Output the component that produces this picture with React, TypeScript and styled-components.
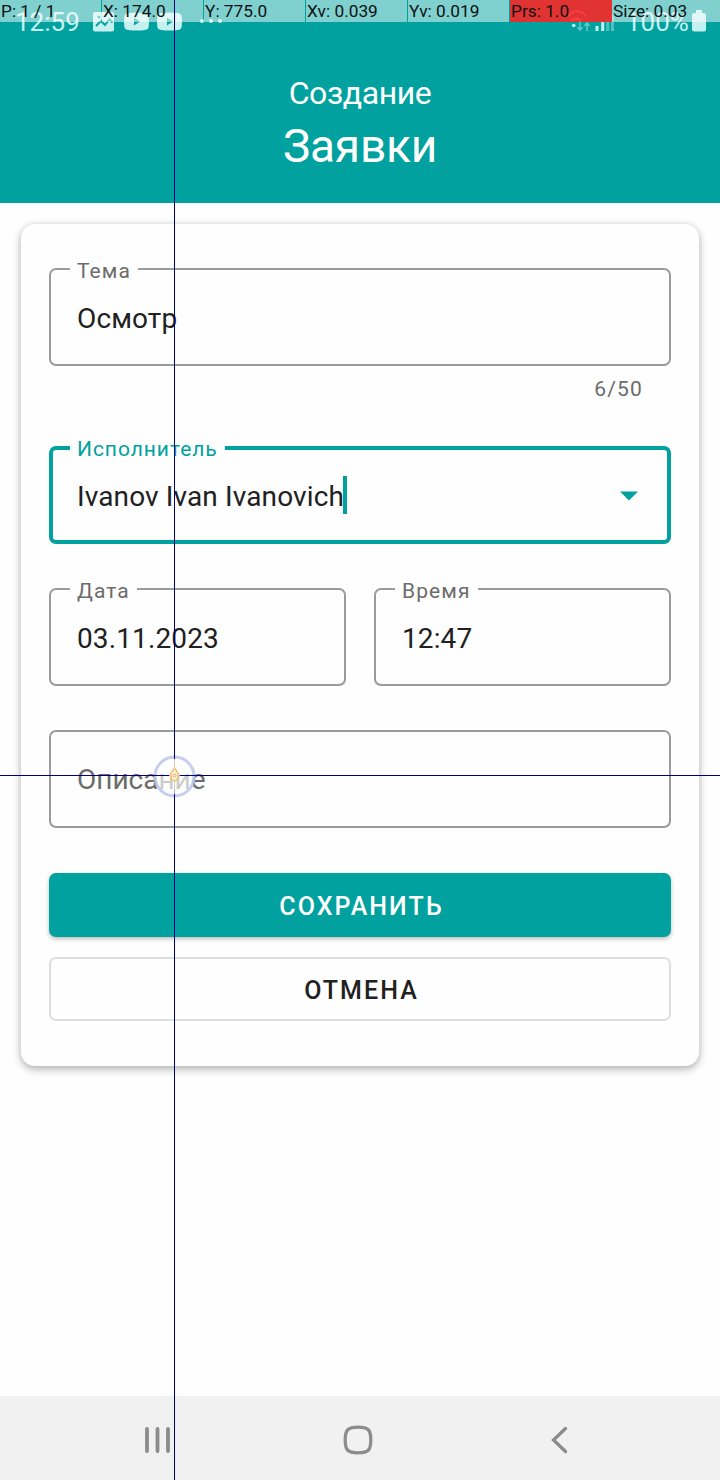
import React from 'react';
import styled, { createGlobalStyle } from 'styled-components';

const TEAL = '#00a19e';

const Global = createGlobalStyle`
  * { box-sizing: border-box; }
  body { margin: 0; background: #fff; font-family: Roboto, "Noto Sans", sans-serif; }
`;

const Screen = styled.div`
  position: relative;
  width: 720px;
  height: 1480px;
  display: flex;
  flex-direction: column;
  overflow: hidden;
  background: #fefefe;
  color: #212121;
`;

const Header = styled.header`
  height: 203px;
  background: ${TEAL};
  color: #fff;
  display: flex;
  flex-direction: column;
  align-items: center;
`;

const StatusBar = styled.div`
  align-self: stretch;
  height: 42px;
  padding: 0 14px 0 15px;
  display: flex;
  align-items: center;
  justify-content: space-between;
  color: #c4f1ef;
`;

const StatusGroup = styled.div`
  display: flex;
  align-items: center;
`;

const StatusText = styled.span<{ $width: number }>`
  width: ${p => p.$width}px;
  padding-top: 2px;
  font-size: 26px;
  line-height: 42px;
  white-space: nowrap;
`;

const Subtitle = styled.div`
  margin-top: 30px;
  font-size: 32px;
  line-height: 42px;
  letter-spacing: -0.4px;
`;

const Title = styled.h1`
  margin: 3px 0 0;
  font-size: 46px;
  font-weight: 400;
  line-height: 58px;
  letter-spacing: -0.2px;
`;

const Main = styled.main`
  flex: 1;
  padding: 21px;
`;

const Card = styled.form`
  height: 842px;
  padding: 44px 28px 45px;
  border-radius: 14px;
  background: #fefefe;
  box-shadow: 0 4px 8px rgba(0, 0, 0, 0.24), 0 0 6px rgba(0, 0, 0, 0.12);
`;

const Field = styled.div<{ $active?: boolean }>`
  position: relative;
  flex: 1;
  height: 98px;
  padding: 0 ${p => (p.$active ? 29 : 26)}px 0 ${p => (p.$active ? 24 : 26)}px;
  border: ${p => (p.$active ? `4px solid ${TEAL}` : '2px solid #9b9b9b')};
  border-radius: 7px;
  display: flex;
  align-items: center;
  justify-content: space-between;
`;

const FieldLabel = styled.label<{ $active?: boolean }>`
  position: absolute;
  left: ${p => (p.$active ? 17 : 19)}px;
  top: ${p => (p.$active ? -14 : -12)}px;
  padding: 0 7px;
  background: #fefefe;
  color: ${p => (p.$active ? TEAL : '#6b6b6b')};
  font-size: 21px;
  line-height: 26px;
  letter-spacing: ${p => (p.$active ? 0.95 : 1.1)}px;
  white-space: nowrap;
`;

const Value = styled.div`
  display: flex;
  align-items: center;
`;

const ValueText = styled.span<{ $muted?: boolean }>`
  padding-top: ${p => (p.$muted ? 2 : 4)}px;
  font-size: 28px;
  line-height: 38px;
  letter-spacing: ${p => (p.$muted ? 0 : 0.12)}px;
  white-space: nowrap;
  color: ${p => (p.$muted ? '#6b6b6b' : '#212121')};
`;

const Caret = styled.span`
  width: 4px;
  height: 38px;
  margin-left: -1px;
  background: ${TEAL};
`;

const DropArrow = styled.svg`
  margin-top: 2px;
`;

const Counter = styled.div`
  height: 80px;
  padding: 10px 28px 0 0;
  text-align: right;
  font-size: 21px;
  line-height: 26px;
  letter-spacing: 1.2px;
  color: #6b6b6b;
`;

const FieldRow = styled.div`
  display: flex;
  gap: 28px;
  margin: 44px 0;
`;

const Button = styled.button<{ $primary?: boolean }>`
  display: block;
  width: 100%;
  height: 64px;
  margin-top: ${p => (p.$primary ? 45 : 20)}px;
  padding: 4px 0 0 3px;
  border: ${p => (p.$primary ? 'none' : '2px solid #dedede')};
  border-radius: 7px;
  background: ${p => (p.$primary ? TEAL : '#fefefe')};
  box-shadow: ${p => (p.$primary ? '0 2px 4px rgba(0,0,0,.26)' : 'none')};
  color: ${p => (p.$primary ? '#fff' : '#212121')};
  font: 500 25px/30px Roboto, "Noto Sans", sans-serif;
  letter-spacing: 2.05px;
`;

const NavBar = styled.nav`
  height: 84px;
  padding: 3px 152px 0 144px;
  display: flex;
  align-items: center;
  justify-content: space-between;
  background: #f1f1f1;
`;

const HomeIcon = styled.svg`
  margin-right: 6px;
`;

const PointerBar = styled.div`
  position: absolute;
  top: 0;
  left: 0;
  width: 720px;
  height: 22px;
  display: flex;
  gap: 1px;
`;

const PointerCell = styled.div<{ $alert?: boolean }>`
  flex: none;
  width: ${p => (p.$alert ? 102 : 101)}px;
  margin-right: ${p => (p.$alert ? -1 : 0)}px;
  padding-left: 1px;
  background: ${p => (p.$alert ? 'rgba(255,35,35,.88)' : 'rgba(255,255,255,.5)')};
  color: #0c1212;
  font-size: 17.3px;
  line-height: 22px;
  white-space: nowrap;
  &:last-child { width: 108px; }
`;

const VerticalLine = styled.div`
  position: absolute;
  left: 174px;
  top: 0;
  width: 1px;
  height: 1480px;
  background: #00007b;
`;

const HorizontalLine = styled.div`
  position: absolute;
  left: 0;
  top: 775px;
  width: 720px;
  height: 1px;
  background: #00007b;
`;

const TouchMark = styled.svg`
  position: absolute;
  left: 152px;
  top: 754px;
`;

const readings = ['P: 1 / 1', 'X: 174.0', 'Y: 775.0', 'Xv: 0.039', 'Yv: 0.019', 'Prs: 1.0', 'Size: 0.03'];

const NoticeIcons = () => (
  <svg width="132" height="42" viewBox="92 0 132 42" fill="currentColor">
    <rect x="93" y="12" width="21" height="19.500" rx="2" />
    <path d="M96 26l5-5 4 4 4.500-6 3 3.500" fill="none" stroke={TEAL} strokeWidth="2" />
    <circle cx="99" cy="17" r="1.600" fill={TEAL} />
    {[124, 157].map(x => (
      <g key={x} transform={`translate(${x} 12.500)`}>
        <path fillRule="evenodd" d="M4 .5Q12.500-.5 21 .5 24.500 1 24.700 4q.6 5 0 10-.2 3-3.700 3.500-8.500 1-17 0Q.5 17 .3 14q-.6-5 0-10Q.5 1 4 .5zM10 5v8l6-4z" />
      </g>
    ))}
    <circle cx="202" cy="21" r="2" />
    <circle cx="211" cy="21" r="2" />
    <circle cx="220" cy="21" r="2" />
  </svg>
);

const SignalIcons = styled.svg`
  margin-right: 6px;
`;

const SignalStrength = () => (
  <SignalIcons width="54" height="42" viewBox="566 0 54 42" fill="none" stroke="currentColor">
    <path d="M568 16q9-9.500 18 0M571 21q5-5 10 0" strokeWidth="2.200" />
    <circle cx="573.700" cy="25.500" r="1.800" fill="currentColor" stroke="none" />
    <path d="M580 22v8M577.500 27l2.500 3 2.500-3M587 31v-8M584.500 26l2.500-3 2.500 3" strokeWidth="1.500" opacity=".5" />
    <path d="M597 31v-5M602.700 31v-9" strokeWidth="3" />
    <path d="M607.700 31V18M612.500 31V14" strokeWidth="3" opacity=".4" />
  </SignalIcons>
);

const BatteryIcon = () => (
  <svg width="14" height="42" viewBox="0 0 14 42" fill="currentColor">
    <path d="M4 10h6v3h2q2 0 2 2v14.500q0 2-2 2H2q-2 0-2-2V15q0-2 2-2h2z" />
  </svg>
);

export default function App() {
  return (
    <Screen>
      <Global />
      <Header>
        <StatusBar>
          <StatusGroup>
            <StatusText $width={77}>12:59</StatusText>
            <NoticeIcons />
          </StatusGroup>
          <StatusGroup>
            <SignalStrength />
            <StatusText $width={66}>100%</StatusText>
            <BatteryIcon />
          </StatusGroup>
        </StatusBar>
        <Subtitle>Создание</Subtitle>
        <Title>Заявки</Title>
      </Header>
      <Main>
        <Card>
          <Field>
            <FieldLabel>Тема</FieldLabel>
            <Value><ValueText>Осмотр</ValueText></Value>
          </Field>
          <Counter>6/50</Counter>
          <Field $active>
            <FieldLabel $active>Исполнитель</FieldLabel>
            <Value><ValueText>Ivanov Ivan Ivanovich</ValueText><Caret /></Value>
            <DropArrow width="18" height="10" viewBox="0 0 18 10"><path d="M0 .5h18l-9 9z" fill={TEAL} /></DropArrow>
          </Field>
          <FieldRow>
            <Field>
              <FieldLabel>Дата</FieldLabel>
              <Value><ValueText>03.11.2023</ValueText></Value>
            </Field>
            <Field>
              <FieldLabel>Время</FieldLabel>
              <Value><ValueText>12:47</ValueText></Value>
            </Field>
          </FieldRow>
          <Field>
            <Value><ValueText $muted>Описание</ValueText></Value>
          </Field>
          <Button type="button" $primary>СОХРАНИТЬ</Button>
          <Button type="button">ОТМЕНА</Button>
        </Card>
      </Main>
      <NavBar>
        <svg width="28" height="28" viewBox="0 0 28 28" stroke="#8c8c8c" strokeWidth="3.800" strokeLinecap="round">
          <path d="M3 3v22M13.500 3v22M24 3v22" />
        </svg>
        <HomeIcon width="30" height="30" viewBox="0 0 30 30" fill="none" stroke="#8c8c8c" strokeWidth="3.300">
          <path d="M15 2.200c10.200 0 12.800 2.600 12.800 12.800S25.200 27.800 15 27.800 2.200 25.200 2.200 15 4.800 2.200 15 2.200z" />
        </HomeIcon>
        <svg width="18" height="28" viewBox="0 0 18 28" fill="none" stroke="#8c8c8c" strokeWidth="3.300" strokeLinecap="round">
          <path d="M15.500 2.500L3.500 14l12 11.500" />
        </svg>
      </NavBar>
      <PointerBar>
        {readings.map(text => (
          <PointerCell key={text} $alert={text.startsWith('Prs')}>{text}</PointerCell>
        ))}
      </PointerBar>
      <VerticalLine />
      <HorizontalLine />
      <TouchMark width="46" height="46" viewBox="0 0 46 46" fill="none">
        <circle cx="22.500" cy="22.500" r="19.500" fill="#fff" fillOpacity=".65" stroke="#bcc4ee" strokeOpacity=".85" strokeWidth="3" />
        <path d="M22.500 0v5M22.500 40v6M0 21.500h17M28 21.500h18" stroke="#00007b" />
        <path d="M22.500 5v30" stroke="#d8d0b4" />
        <path d="M22.500 14l4 6-1 5-3 2-3-2-1-5z" stroke="#f3c27a" strokeWidth="1.500" fill="#fff4dd" />
        <circle cx="22.500" cy="21.500" r="1.500" stroke="#e8ad5c" />
      </TouchMark>
    </Screen>
  );
}
